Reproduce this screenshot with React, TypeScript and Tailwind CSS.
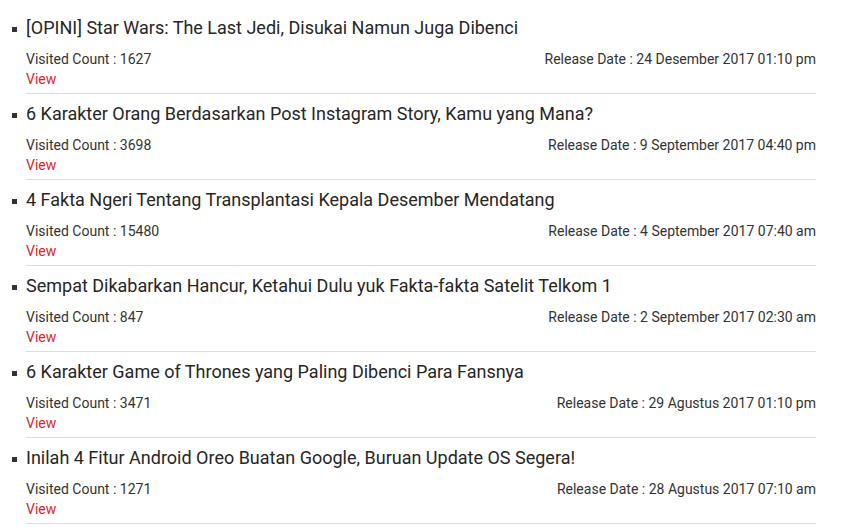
import React from 'react';

interface Post {
    title: string;
    count: number;
    date: string;
}

const posts: Post[] = [
    { title: '[OPINI] Star Wars: The Last Jedi, Disukai Namun Juga Dibenci', count: 1627, date: '24 Desember 2017 01:10 pm' },
    { title: '6 Karakter Orang Berdasarkan Post Instagram Story, Kamu yang Mana?', count: 3698, date: '9 September 2017 04:40 pm' },
    { title: '4 Fakta Ngeri Tentang Transplantasi Kepala Desember Mendatang', count: 15480, date: '4 September 2017 07:40 am' },
    { title: 'Sempat Dikabarkan Hancur, Ketahui Dulu yuk Fakta-fakta Satelit Telkom 1', count: 847, date: '2 September 2017 02:30 am' },
    { title: '6 Karakter Game of Thrones yang Paling Dibenci Para Fansnya', count: 3471, date: '29 Agustus 2017 01:10 pm' },
    { title: 'Inilah 4 Fitur Android Oreo Buatan Google, Buruan Update OS Segera!', count: 1271, date: '28 Agustus 2017 07:10 am' },
];

export default function App() {
    return (
        <div className="w-[846px] h-[527px] overflow-hidden bg-white pt-[8px] pl-[26px] pr-[30px] font-['Roboto',sans-serif] text-[#333]">
            <ul>
                {posts.map((post) => (
                    <li key={post.title} className="pt-[7px] pb-[4px] border-b border-[#ddd]">
                        <div className="relative text-[18px] leading-[26px] text-[#262626]">
                            <span className="absolute left-[-14px] top-[12px] w-[5px] h-[5px] bg-[#333]" />
                            {post.title}
                        </div>
                        <div className="mt-2 flex justify-between text-[14px] leading-[20px]">
                            <span>Visited Count : {post.count}</span>
                            <span>Release Date : {post.date}</span>
                        </div>
                        <a className="block text-[14px] leading-[20px] text-[#d9232d]">View</a>
                    </li>
                ))}
            </ul>
        </div>
    );
}
